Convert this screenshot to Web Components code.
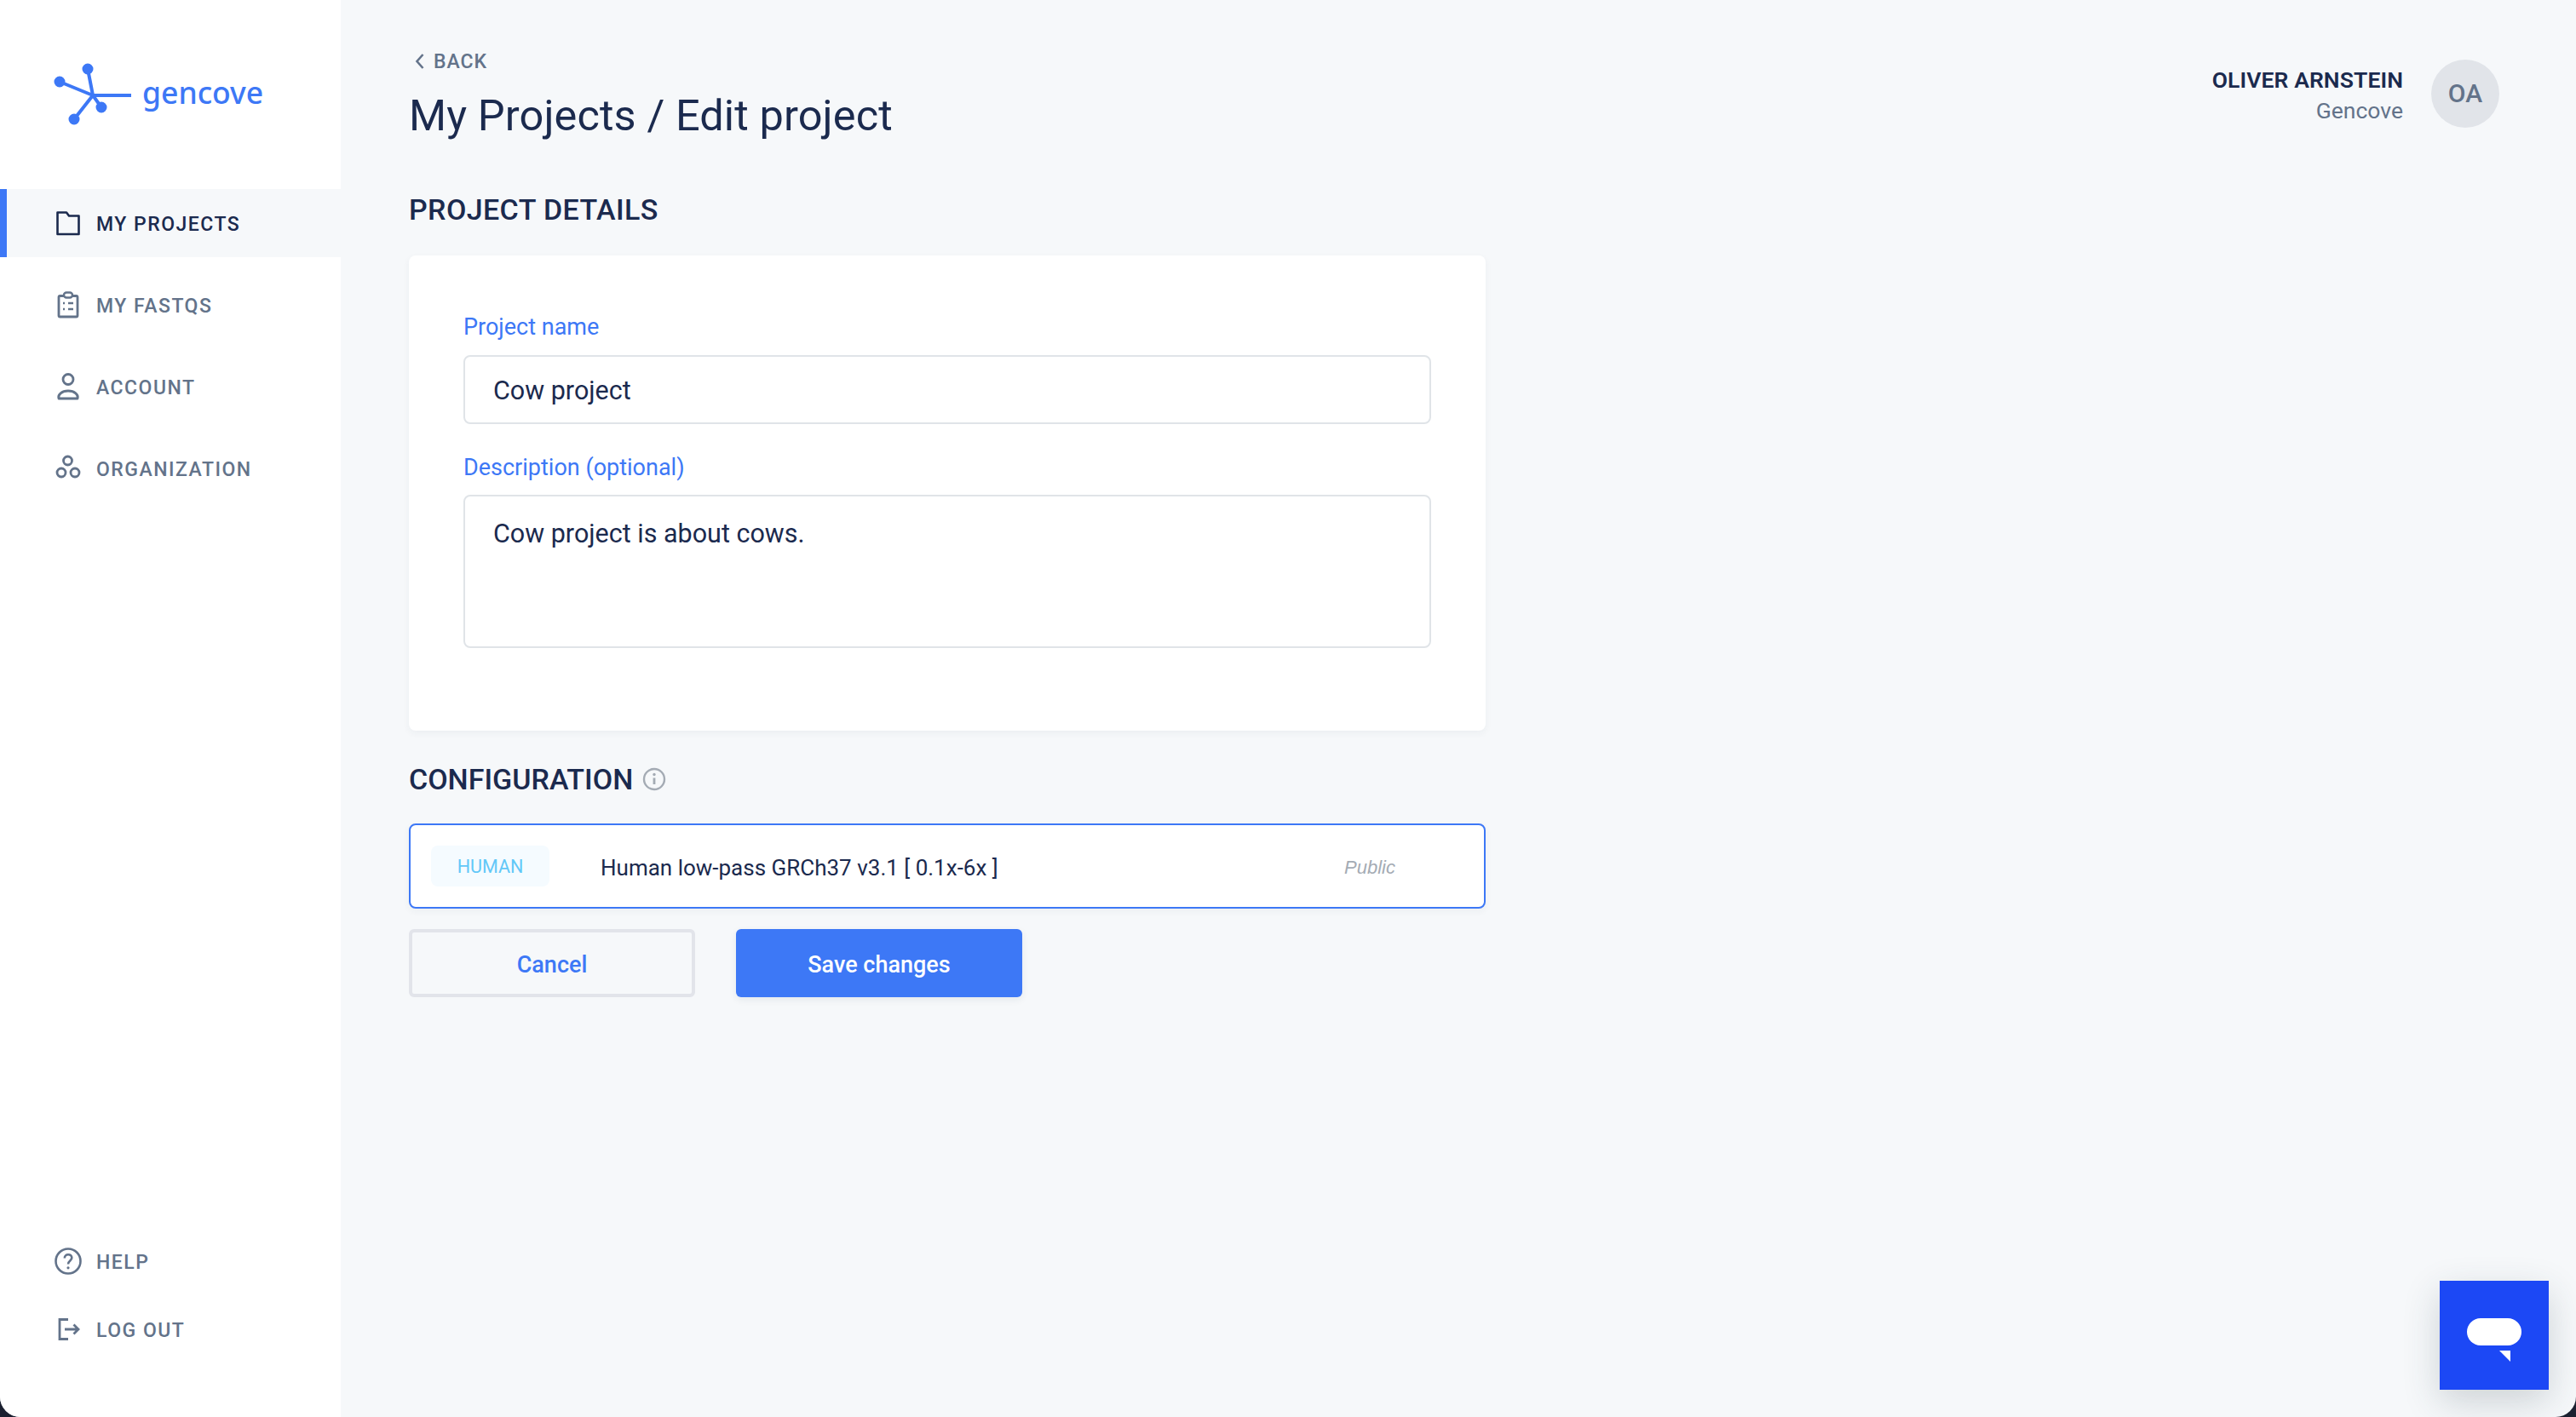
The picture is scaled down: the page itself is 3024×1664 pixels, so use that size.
<!DOCTYPE html>
<html>
<head>
<meta charset="utf-8">
<title>Edit project</title>
<style>
  html, body { margin: 0; height: 100%; background: #1b2030; }
  body { font-family: Roboto, "Liberation Sans", sans-serif; }
  gc-app { height: 1664px; }
</style>
</head>
<body>
<gc-app>
  <gc-sidebar slot="side">
    <gc-nav-item icon="folder" active>MY PROJECTS</gc-nav-item>
    <gc-nav-item icon="clipboard">MY FASTQS</gc-nav-item>
    <gc-nav-item icon="person">ACCOUNT</gc-nav-item>
    <gc-nav-item icon="org">ORGANIZATION</gc-nav-item>
    <gc-nav-item slot="bottom" icon="help">HELP</gc-nav-item>
    <gc-nav-item slot="bottom" icon="logout">LOG OUT</gc-nav-item>
  </gc-sidebar>

  <gc-page-head title="My Projects / Edit project">
    <gc-user name="OLIVER ARNSTEIN" org="Gencove" initials="OA"></gc-user>
  </gc-page-head>

  <gc-section-title>PROJECT DETAILS</gc-section-title>
  <gc-card>
    <gc-field label="Project name">Cow project</gc-field>
    <gc-field label="Description (optional)" tall>Cow project is about cows.</gc-field>
  </gc-card>

  <gc-section-title info class="config">CONFIGURATION</gc-section-title>
  <gc-config-row tag="HUMAN" access="Public">Human low-pass GRCh37 v3.1 [ 0.1x-6x ]</gc-config-row>
  <gc-actions>
    <gc-button>Cancel</gc-button>
    <gc-button primary>Save changes</gc-button>
  </gc-actions>

  <gc-chat slot="float"></gc-chat>
</gc-app>

<script>
const icons = {
  folder: `<path d="M3.500 3.500h10.500l3 4h11.500v21.500h-25z" stroke-width="2.600" stroke-linejoin="round"/>`,
  clipboard: `<rect x="5" y="5.500" width="22" height="24.500" rx="1.500" stroke-width="2.800"/>
    <rect x="11" y="1.500" width="10" height="6" rx="3" fill="#fff" stroke-width="2.400"/>
    <path d="M10 14h2M16 14h6M10 21h2M16 21h6" stroke-width="2.400"/>`,
  person: `<circle cx="16" cy="7.500" r="6" stroke-width="2.800"/>
    <path d="M5 30c-1.500-4.500 3.500-9 11-9s12.500 4.500 11 9z" stroke-width="2.800" stroke-linejoin="round"/>`,
  org: `<circle cx="15.500" cy="7" r="5" stroke-width="2.800"/>
    <circle cx="8" cy="21" r="5" stroke-width="2.800"/>
    <circle cx="24" cy="21" r="5" stroke-width="2.800"/>`,
  help: `<circle cx="16" cy="16" r="14.500" stroke-width="2.600"/>
    <path d="M11.800 12.500c0-2.600 1.900-4.200 4.300-4.200s4.200 1.500 4.200 3.800c0 3.400-4.300 3.400-4.300 7.400" stroke-width="2.600"/>
    <circle cx="16" cy="23.800" r="1.600" fill="currentColor" stroke="none"/>`,
  logout: `<path d="M16 4.500H6v23h10" stroke-width="2.800"/>
    <path d="M12 16h16M22.500 10.500 28 16l-5.500 5.500" stroke-width="2.800"/>`
};

class GcApp extends HTMLElement {
  constructor() {
    super();
    this.attachShadow({ mode: "open" }).innerHTML = `
      <style>
        :host { display: flex; width: 3024px; background: #f6f8fa; color: #1b2a4e;
          border-radius: 0 0 24px 24px; overflow: hidden; position: relative; }
        .main { flex: 1; padding: 0 90px 0 80px; min-width: 0; }
      </style>
      <slot name="side"></slot>
      <div class="main"><slot></slot></div>
      <slot name="float"></slot>`;
  }
}

class GcSidebar extends HTMLElement {
  constructor() {
    super();
    this.attachShadow({ mode: "open" }).innerHTML = `
      <style>
        :host { display: flex; flex-direction: column; width: 400px; flex: none; background: #fff; box-sizing: border-box; padding-bottom: 71px; }
        .logo { display: flex; align-items: center; height: 222px; padding: 0 0 0 61px; box-sizing: border-box; gap: 10px; }
        .logo svg { display: block; margin-top: -1px; }
        .word { font: 500 35.500px/1 "Noto Sans", sans-serif; color: #3d78f6; margin-top: -5px; }
        nav, .bottom { display: flex; flex-direction: column; gap: 16px; }
        .bottom { margin-top: auto; }
      </style>
      <div class="logo">
        <svg width="96" height="80" viewBox="60 70 96 80" fill="#3d78f6" stroke="#3d78f6" stroke-width="4">
          <path d="M69 95 108 111M102 80 108 111 118 125M86 139 108 111H153" fill="none"/>
          <circle cx="102" cy="80" r="4.500"/><circle cx="69" cy="95" r="4.500"/>
          <circle cx="118" cy="125" r="4.500"/><circle cx="86" cy="139" r="4.500"/>
        </svg>
        <span class="word">gencove</span>
      </div>
      <nav><slot></slot></nav>
      <div class="bottom"><slot name="bottom"></slot></div>`;
  }
}

class GcNavItem extends HTMLElement {
  constructor() {
    super();
    const active = this.hasAttribute("active");
    this.attachShadow({ mode: "open" }).innerHTML = `
      <style>
        :host { display: flex; align-items: center; height: 80px; box-sizing: border-box; padding-left: 64px; gap: 17px;
          font: 500 23px/1 Roboto, sans-serif; letter-spacing: 1.500px; color: ${active ? "#1b2a4e" : "#63738a"}; position: relative;
          background: ${active ? "#f6f8fa" : "transparent"}; }
        :host([slot=bottom]) { height: 64px; }
        .bar { position: absolute; left: 0; top: 0; bottom: 0; width: 8px; background: #3d78f6; }
        svg { display: block; flex: none; }
        .label { margin-top: 2px; }
      </style>
      ${active ? `<div class="bar"></div>` : ""}
      <svg width="32" height="32" viewBox="0 0 32 32" fill="none" stroke="currentColor">${icons[this.getAttribute("icon")]}</svg>
      <span class="label"><slot></slot></span>`;
  }
}

class GcPageHead extends HTMLElement {
  constructor() {
    super();
    this.attachShadow({ mode: "open" }).innerHTML = `
      <style>
        :host { display: flex; justify-content: space-between; align-items: flex-start; height: 222px; box-sizing: border-box; padding-top: 60px; }
        .back { display: flex; align-items: center; gap: 10px; height: 24px; padding-left: 7px; font: 500 23px/1 Roboto, sans-serif; letter-spacing: 1px; color: #63738a; }
        h1 { margin: 22px 0 0; font: 400 50.500px/60px Roboto, sans-serif; letter-spacing: 0.100px; color: #1b2a4e; }
        svg { display: block; }
      </style>
      <div>
        <div class="back">
          <svg width="12" height="20" viewBox="0 0 12 20" fill="none" stroke="currentColor" stroke-width="2.600"><path d="M9.500 2 2.500 10l7 8"/></svg>
          BACK
        </div>
        <h1>${this.getAttribute("title")}</h1>
      </div>
      <slot></slot>`;
    this.removeAttribute("title");
  }
}

class GcUser extends HTMLElement {
  constructor() {
    super();
    this.attachShadow({ mode: "open" }).innerHTML = `
      <style>
        :host { display: flex; align-items: center; gap: 33px; margin-top: 10px; }
        .who { text-align: right; padding-top: 3px; }
        .name { font: 600 26.500px/32px Roboto, sans-serif; letter-spacing: 0.100px; color: #1b2a4e; }
        .org { font: 400 26.500px/32px Roboto, sans-serif; color: #63738a; margin-top: 4px; }
        .avatar { width: 80px; height: 80px; border-radius: 50%; background: #e1e4e9; color: #63738a;
          display: flex; align-items: center; justify-content: center; font: 500 30px/1 Roboto, sans-serif; }
      </style>
      <div class="who">
        <div class="name">${this.getAttribute("name")}</div>
        <div class="org">${this.getAttribute("org")}</div>
      </div>
      <div class="avatar">${this.getAttribute("initials")}</div>`;
  }
}

class GcSectionTitle extends HTMLElement {
  constructor() {
    super();
    this.attachShadow({ mode: "open" }).innerHTML = `
      <style>
        :host { display: flex; align-items: center; gap: 11px; height: 78px; font: 500 34px/1 Roboto, sans-serif; color: #1b2a4e; letter-spacing: 0.400px; box-sizing: border-box; padding-bottom: 30px; }
        :host(.config) { height: 109px; padding-bottom: 0; align-items: flex-start; padding-top: 40px; letter-spacing: 0; }
        svg { display: block; margin-top: 3px; }
      </style>
      <slot></slot>
      ${this.hasAttribute("info") ? `<svg width="28" height="28" viewBox="0 0 28 28" fill="none" stroke="#a4abb4" stroke-width="2.400">
        <circle cx="14" cy="14" r="12"/><path d="M14 12.500V20" stroke-width="2.800"/><circle cx="14" cy="8.500" r="1.700" fill="#a4abb4" stroke="none"/></svg>` : ""}`;
  }
}

class GcCard extends HTMLElement {
  constructor() {
    super();
    this.attachShadow({ mode: "open" }).innerHTML = `
      <style>
        :host { display: flex; flex-direction: column; width: 1264px; height: 558px; box-sizing: border-box; padding: 64px;
          gap: 30px; background: #fff; border-radius: 8px; box-shadow: 0 3px 8px rgba(30, 50, 80, .05); }
      </style>
      <slot></slot>`;
  }
}

class GcField extends HTMLElement {
  constructor() {
    super();
    const tall = this.hasAttribute("tall");
    this.attachShadow({ mode: "open" }).innerHTML = `
      <style>
        :host { display: block; }
        label { display: block; box-sizing: border-box; height: 53px; padding-top: ${tall ? 6 : 5}px; font: 400 27px/30px Roboto, sans-serif; color: #3d78f6; }
        .box { box-sizing: border-box; height: ${tall ? 180 : 81}px; padding: ${tall ? "26px" : "3px"} 33px 0; border: 2px solid #e0e4e8; border-radius: 8px;
          font: 400 30.500px/1.200 Roboto, sans-serif; color: #1b2a4e; ${tall ? "" : "display: flex; align-items: center;"} }
      </style>
      <label>${this.getAttribute("label")}</label>
      <div class="box"><slot></slot></div>`;
  }
}

class GcConfigRow extends HTMLElement {
  constructor() {
    super();
    this.attachShadow({ mode: "open" }).innerHTML = `
      <style>
        :host { display: flex; align-items: center; box-sizing: border-box; width: 1264px; height: 100px; padding-left: 24px;
          background: #fff; border: 2px solid #3d78f6; border-radius: 8px; box-shadow: 0 3px 8px rgba(30, 50, 80, .05); }
        .tag { width: 89px; height: 46px; border-radius: 8px; background: #f5fbff; color: #62c8f8; display: flex; align-items: center; justify-content: center;
          font: 400 21.500px/1 Roboto, sans-serif; padding: 2px 25px 0; }
        .name { flex: 1; margin-left: 60px; font: 400 26px/1 Roboto, sans-serif; color: #1b2a4e; padding-top: 4px; }
        .access { margin-right: 104px; font: italic 400 22px/1 "Liberation Sans", sans-serif; color: #a4abb4; padding-top: 3px; }
      </style>
      <div class="tag">${this.getAttribute("tag")}</div>
      <div class="name"><slot></slot></div>
      <div class="access">${this.getAttribute("access")}</div>`;
  }
}

class GcActions extends HTMLElement {
  constructor() {
    super();
    this.attachShadow({ mode: "open" }).innerHTML = `
      <style>:host { display: flex; gap: 48px; margin-top: 24px; }</style>
      <slot></slot>`;
  }
}

class GcButton extends HTMLElement {
  constructor() {
    super();
    const primary = this.hasAttribute("primary");
    this.attachShadow({ mode: "open" }).innerHTML = `
      <style>
        :host { display: flex; align-items: center; justify-content: center; box-sizing: border-box; width: 336px; height: 80px; border-radius: 6px;
          padding-top: 4px; font: 500 27px/1 Roboto, sans-serif;
          ${primary ? "background: #3d78f6; color: #fff; box-shadow: 0 3px 8px rgba(30, 50, 80, .08);" : "border: 4px solid #e2e4ea; color: #3d78f6;"} }
      </style>
      <slot></slot>`;
  }
}

class GcChat extends HTMLElement {
  constructor() {
    super();
    this.attachShadow({ mode: "open" }).innerHTML = `
      <style>
        :host { position: absolute; right: 32px; bottom: 32px; width: 128px; height: 128px; background: #1c48f5;
          box-shadow: 0 14px 44px rgba(40, 60, 70, .2); display: flex; align-items: center; justify-content: center; }
        svg { display: block; margin-top: 12px; }
      </style>
      <svg width="64" height="52" viewBox="0 0 64 52" fill="#fff">
        <rect width="64" height="32" rx="16"/>
        <path d="M38 38H51V51z"/>
      </svg>`;
  }
}

customElements.define("gc-app", GcApp);
customElements.define("gc-sidebar", GcSidebar);
customElements.define("gc-nav-item", GcNavItem);
customElements.define("gc-page-head", GcPageHead);
customElements.define("gc-user", GcUser);
customElements.define("gc-section-title", GcSectionTitle);
customElements.define("gc-card", GcCard);
customElements.define("gc-field", GcField);
customElements.define("gc-config-row", GcConfigRow);
customElements.define("gc-actions", GcActions);
customElements.define("gc-button", GcButton);
customElements.define("gc-chat", GcChat);
</script>
</body>
</html>
